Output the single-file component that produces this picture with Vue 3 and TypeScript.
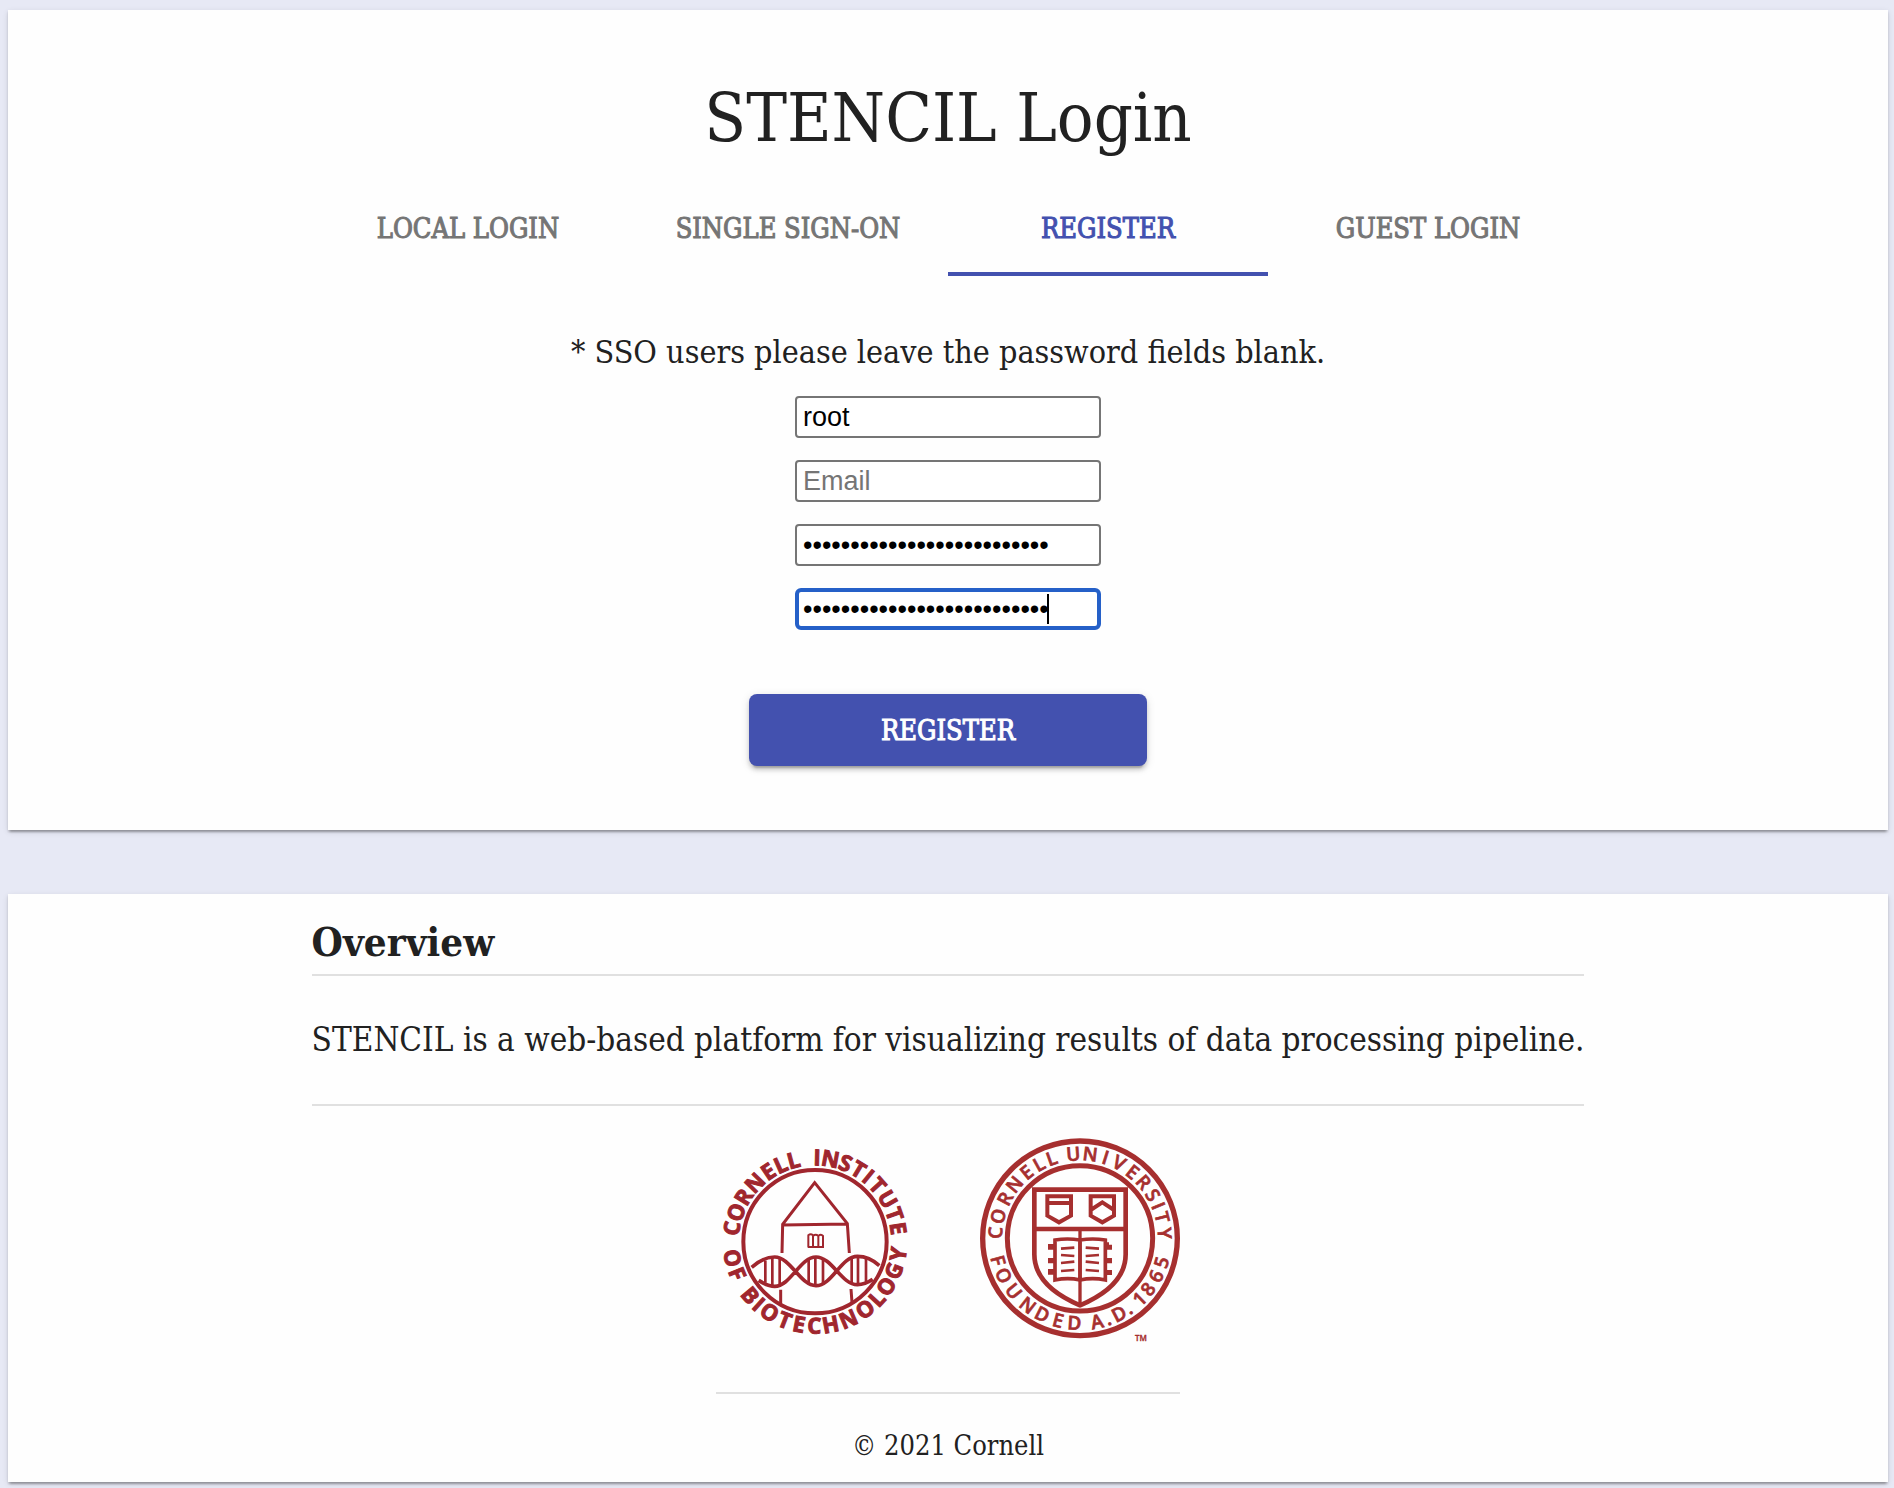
<script setup lang="ts">
import { ref } from 'vue'

type Placed = [string, number]

interface Arc {
  text: string
  x: string
  y: string
  rotate: string
}

const username = ref('root')
const email = ref('')
const password = ref('abcdefghijklmnopqrstuvwxyz')
const confirmation = ref('abcdefghijklmnopqrstuvwxyz')

const tabs = ['Local Login', 'Single Sign-On', 'Register', 'Guest Login']
const active = ref('Register')

// Advance widths of the lettering, in em.
const advance: Record<string, number> = {
  A: 0.69, B: 0.66, C: 0.63, D: 0.74, E: 0.56, F: 0.54, G: 0.73, H: 0.78, I: 0.32,
  L: 0.55, N: 0.8, O: 0.8, R: 0.65, S: 0.55, T: 0.57, U: 0.75, V: 0.64, Y: 0.61,
  '.': 0.28, '1': 0.57, '8': 0.57, '6': 0.57, '5': 0.57,
}

// Seats each letter, centred on its clockwise angle from twelve o'clock, on a ring.
function arc(letters: Placed[], cx: number, cy: number, r: number, size: number, inward = false): Arc {
  const xs: string[] = []
  const ys: string[] = []
  const rs: string[] = []
  for (const [ch, deg] of letters) {
    const a = (deg * Math.PI) / 180
    const turn = inward ? deg + 180 : deg
    const t = (turn * Math.PI) / 180
    const half = ((advance[ch] ?? 0.6) * size) / 2
    xs.push((cx + r * Math.sin(a) - half * Math.cos(t)).toFixed(1))
    ys.push((cy - r * Math.cos(a) - half * Math.sin(t)).toFixed(1))
    rs.push(turn.toFixed(1))
  }
  return { text: letters.map((l) => l[0]).join(''), x: xs.join(' '), y: ys.join(' '), rotate: rs.join(' ') }
}

const institute: Arc[] = [
  arc([['C', -81], ['O', -69.5], ['R', -58], ['N', -45.8], ['E', -33.7], ['L', -24.2], ['L', -15]], 297, 311, 229, 66),
  arc([['I', 1.4], ['N', 10.5], ['S', 21.2], ['T', 31], ['I', 39.2], ['T', 48], ['U', 59.6], ['T', 70.9], ['E', 81]], 297, 311, 229, 66),
  arc([['O', -101.3], ['F', -112.4]], 297, 311, 276, 66, true),
  arc([['B', -129.7], ['I', -138], ['O', -147.3], ['T', -158.9], ['E', -169], ['C', -179.5], ['H', 169.2], ['N', 156.7],
    ['O', 143.4], ['L', 132.6], ['O', 122.1], ['G', 110.2], ['Y', 98.5]], 297, 311, 276, 66, true),
]

const university: Arc[] = [
  arc([['C', -86.2], ['O', -74.8], ['R', -62.1], ['N', -50.5], ['E', -38.9], ['L', -28.8], ['L', -19.5]], 300, 301, 234, 57),
  arc([['U', -4.5], ['N', 7], ['I', 17.6], ['V', 27.5], ['E', 38.4], ['R', 48.6], ['S', 59.2], ['I', 67.5], ['T', 75.7],
    ['Y', 86.6]], 300, 301, 234, 57),
  arc([['F', -105.2], ['O', -116], ['U', -128.7], ['N', -142.1], ['D', -153.6], ['E', -165], ['D', -176.2]], 300, 301, 275, 57, true),
  arc([['A', 168.2], ['.', 160.8], ['D', 152.5], ['.', 145.4]], 300, 301, 275, 57, true),
  arc([['1', 135.5], ['8', 126.7], ['6', 116.4], ['5', 106.4]], 300, 301, 275, 57, true),
]
</script>

<template>
  <div class="page">
    <main class="paper login">
      <h1>STENCIL Login</h1>
      <div class="tabs" role="tablist">
        <button
          v-for="tab in tabs"
          :key="tab"
          type="button"
          role="tab"
          class="tab"
          :class="{ active: tab === active }"
          :aria-selected="tab === active"
          @click="active = tab"
        >
          {{ tab }}
        </button>
      </div>
      <form @submit.prevent>
        <p class="note">* SSO users please leave the password fields blank.</p>
        <div class="fields">
          <input v-model="username" type="text" aria-label="Username" />
          <input v-model="email" type="email" placeholder="Email" aria-label="Email" />
          <input v-model="password" type="password" aria-label="Password" />
          <div class="current">
            <input v-model="confirmation" type="password" aria-label="Confirm password" />
            <span class="caret"></span>
          </div>
        </div>
        <button type="submit" class="submit">Register</button>
      </form>
    </main>

    <footer class="paper about">
      <section class="overview">
        <h2>Overview</h2>
        <hr />
        <p>STENCIL is a web-based platform for visualizing results of data processing pipeline.</p>
        <hr />
      </section>
      <div class="credits">
        <div class="logos">
          <svg class="institute" viewBox="0 0 600 612" role="img" aria-label="Cornell Institute of Biotechnology">
            <g fill="none" stroke="currentColor">
              <circle cx="297" cy="311" r="215" stroke-width="12" />
              <path stroke-width="9" d="M198 345 200 259 296 134 394 257 400 345M200 261 394 258M194 455V498M405 453 408 494" />
              <path
                stroke-width="11"
                d="M107 388C133 365 158 357 176 357C224 357 252 443 300 443C348 443 376 355 424 355C450 355 470 364 490 383M128 427C150 441 160 445 176 445C224 445 252 357 300 357C348 357 376 440 424 440C444 440 456 434 470 424"
              />
              <path stroke-width="8" d="M148 368V434M169 360V442M191 360V442M278 364V436M298 360V440M321 364V436M407 360V436M426 358V438M450 362V434" />
              <path stroke-width="6" d="M277 327V292q7-6 14 0V325M291 294q8-7 16 0V325M307 294q8-7 14 0V327H275" />
            </g>
            <text>
              <tspan v-for="(line, i) in institute" :key="i" :x="line.x" :y="line.y" :rotate="line.rotate">{{ line.text }}</tspan>
            </text>
          </svg>
          <svg class="university" viewBox="0 0 600 612" role="img" aria-label="Cornell University, founded A.D. 1865">
            <g fill="none" stroke="currentColor">
              <circle cx="300" cy="301" r="292" stroke-width="16" />
              <circle cx="300" cy="301" r="218" stroke-width="15" />
              <path stroke-width="14" d="M163 155H437V349C437 420 380 468 300 502C220 468 163 420 163 349Z" />
              <path stroke-width="13" d="M163 273H437" />
              <path stroke-width="10" d="M300 273V502" />
              <path stroke-width="12" d="M202 175H273V233L237 253 202 233ZM202 195H273M332 175H402V233L367 253 332 233ZM332 216 367 193 402 216" />
              <path stroke-width="11" d="M300 306Q262 300 225 306V426Q264 418 300 426Q338 418 376 426V306Q338 300 300 306V426" />
              <path stroke-width="8" d="M243 332 283 329M243 351 283 354M243 375 283 371M243 399 283 396M317 329 357 332M317 354 357 351M317 371 357 375M317 396 357 399" />
            </g>
            <path
              fill="currentColor"
              d="M204 318H222V335H204ZM204 360H222V376H204ZM204 393H222V410H204ZM379 313H387V320H396V335H379ZM379 360H396V376H379ZM379 396H396V411H379Z"
            />
            <text>
              <tspan v-for="(line, i) in university" :key="i" :x="line.x" :y="line.y" :rotate="line.rotate">{{ line.text }}</tspan>
            </text>
            <text class="mark" x="465" y="608">TM</text>
          </svg>
        </div>
        <hr />
        <small>© 2021 Cornell</small>
      </div>
    </footer>
  </div>
</template>

<style>
body {
  background: #e7e9f5;
}
</style>

<style scoped>
.page {
  display: flex;
  flex-direction: column;
  gap: 64px;
  padding: 10px 6px 6px 8px;
  color: #212121;
  font-family: 'Roboto Slab', 'DejaVu Serif Condensed', 'DejaVu Serif', serif;
  font-size: 32px;
  line-height: 48px;
}
h1,
h2,
p,
hr {
  margin: 0;
  font-weight: 400;
}
hr {
  width: 100%;
  height: 2px;
  border: 0;
  background: #e0e0e0;
}
.paper {
  display: flex;
  flex-direction: column;
  align-items: center;
  background: #fefefe;
  box-shadow:
    0 4px 2px -2px rgba(0, 0, 0, 0.2),
    0 2px 2px rgba(0, 0, 0, 0.14),
    0 2px 6px rgba(0, 0, 0, 0.12);
}
.login {
  padding: 68px 0 64px;
}
h1 {
  font-size: 68px;
  line-height: 80px;
}
.tabs {
  display: grid;
  grid-template-columns: repeat(4, 1fr);
  width: 100%;
  max-width: 1280px;
  margin: 22px 0 52px;
}
button {
  border: 0;
  font-family: inherit;
  font-size: 27px;
  font-weight: 500;
  text-transform: uppercase;
  -webkit-text-stroke: 1px currentColor;
  cursor: pointer;
}
.tab {
  height: 96px;
  padding: 4px 0 0;
  border-bottom: 4px solid transparent;
  background: none;
  color: #757575;
}
.tab.active {
  border-color: #4351af;
  color: #4351af;
}
form {
  display: flex;
  flex-direction: column;
  align-items: center;
}
.fields {
  display: flex;
  flex-direction: column;
  gap: 22px;
  margin: 20px 0 64px;
}
input {
  display: block;
  box-sizing: border-box;
  width: 306px;
  height: 42px;
  padding: 0 6px;
  border: 2px solid #757575;
  border-radius: 4px;
  outline: 0;
  background: #fff;
  color: #000;
  font-family: 'Liberation Sans', sans-serif;
  font-size: 27px;
}
input::placeholder {
  color: #757575;
}
.current {
  position: relative;
}
.current input {
  padding: 0 4px;
  border: 4px solid #2560c8;
  border-radius: 6px;
}
.caret {
  position: absolute;
  top: 6px;
  left: 252px;
  width: 2px;
  height: 30px;
  background: #000;
}
.submit {
  width: 398px;
  height: 72px;
  border-radius: 8px;
  background: #4351af;
  color: #fff;
  box-shadow:
    0 6px 2px -4px rgba(0, 0, 0, 0.2),
    0 4px 4px rgba(0, 0, 0, 0.14),
    0 2px 10px rgba(0, 0, 0, 0.12);
}
.about {
  padding: 24px 0 16px;
}
h2 {
  margin-bottom: 8px;
  font-size: 40px;
  font-weight: 600;
}
.overview p {
  margin: 40px 0;
  font-size: 33px;
}
.credits {
  display: flex;
  flex-direction: column;
  align-items: center;
  padding-top: 32px;
}
.logos {
  display: flex;
  gap: 64px;
  margin-bottom: 50px;
}
.logos svg {
  display: block;
  width: 200px;
  height: 204px;
  overflow: visible;
}
.logos text {
  fill: currentColor;
  stroke: currentColor;
  font-family: 'Open Sans', 'Noto Sans', sans-serif;
}
.institute {
  color: #a0262e;
}
.institute text {
  stroke-width: 3px;
  font-size: 66px;
  font-weight: 700;
}
.university {
  color: #a62f2f;
}
.university text {
  stroke-width: 2px;
  font-size: 57px;
  font-weight: 600;
}
.university .mark {
  stroke-width: 1px;
  font-size: 24px;
}
small {
  margin-top: 32px;
  font-size: 27px;
  line-height: 40px;
}
</style>
